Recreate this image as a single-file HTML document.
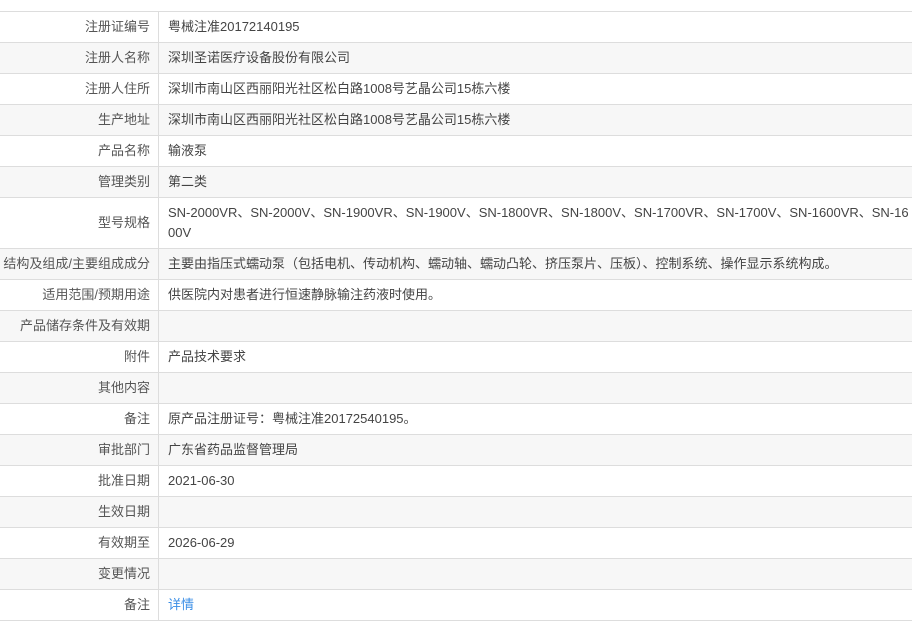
<!DOCTYPE html>
<html><head><meta charset="utf-8"><style>
html,body{margin:0;padding:0;background:#fff;width:912px;height:598px;overflow:hidden}
body{font-family:"Liberation Sans","Noto Sans CJK SC",sans-serif;font-size:13px;color:#444}
table{border-collapse:collapse;width:914px;position:absolute;top:11px;left:-1px;table-layout:fixed}
td{border:1px solid #ddd;height:30px;padding:0;line-height:20px;vertical-align:middle}
td.l{width:150px;text-align:right;padding-right:8px;color:#555}
td.v{padding-left:9px;padding-right:0;word-break:break-all}
tr:nth-child(even) td{background:#f7f7f7}
.top{position:absolute;top:0;left:0;width:912px;height:11px;background:#fff}
a{color:#3a8ee6;text-decoration:none}
</style></head><body>
<div class="top"></div>
<table>
<tr><td class="l">注册证编号</td><td class="v">粤械注准20172140195</td></tr>
<tr><td class="l">注册人名称</td><td class="v">深圳圣诺医疗设备股份有限公司</td></tr>
<tr><td class="l">注册人住所</td><td class="v">深圳市南山区西丽阳光社区松白路1008号艺晶公司15栋六楼</td></tr>
<tr><td class="l">生产地址</td><td class="v">深圳市南山区西丽阳光社区松白路1008号艺晶公司15栋六楼</td></tr>
<tr><td class="l">产品名称</td><td class="v">输液泵</td></tr>
<tr><td class="l">管理类别</td><td class="v">第二类</td></tr>
<tr><td class="l" style="height:50px">型号规格</td><td class="v">SN-2000VR、SN-2000V、SN-1900VR、SN-1900V、SN-1800VR、SN-1800V、SN-1700VR、SN-1700V、SN-1600VR、SN-1600V</td></tr>
<tr><td class="l">结构及组成/主要组成成分</td><td class="v">主要由指压式蠕动泵（包括电机、传动机构、蠕动轴、蠕动凸轮、挤压泵片、压板）、控制系统、操作显示系统构成。</td></tr>
<tr><td class="l">适用范围/预期用途</td><td class="v">供医院内对患者进行恒速静脉输注药液时使用。</td></tr>
<tr><td class="l">产品储存条件及有效期</td><td class="v"></td></tr>
<tr><td class="l">附件</td><td class="v">产品技术要求</td></tr>
<tr><td class="l">其他内容</td><td class="v"></td></tr>
<tr><td class="l">备注</td><td class="v">原产品注册证号：粤械注准20172540195。</td></tr>
<tr><td class="l">审批部门</td><td class="v">广东省药品监督管理局</td></tr>
<tr><td class="l">批准日期</td><td class="v">2021-06-30</td></tr>
<tr><td class="l">生效日期</td><td class="v"></td></tr>
<tr><td class="l">有效期至</td><td class="v">2026-06-29</td></tr>
<tr><td class="l">变更情况</td><td class="v"></td></tr>
<tr><td class="l">备注</td><td class="v"><a>详情</a></td></tr>
</table>
</body></html>
